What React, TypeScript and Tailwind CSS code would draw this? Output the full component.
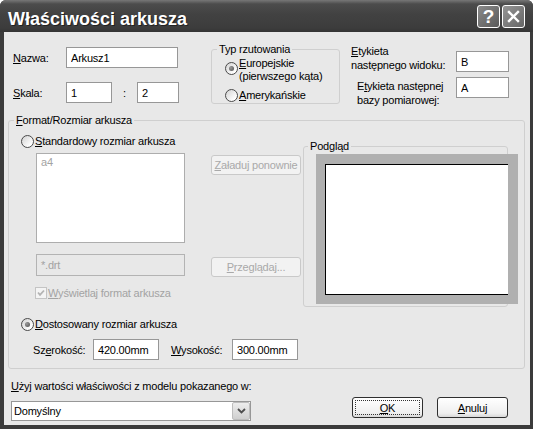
import React from "react";

function U({ children }: { children: React.ReactNode }) {
  return <span className="underline decoration-1 underline-offset-[1px]">{children}</span>;
}

function Radio({ checked }: { checked?: boolean }) {
  return (
    <span className="flex h-[13px] w-[13px] shrink-0 items-center justify-center rounded-full border border-[#4a4a4a] bg-[linear-gradient(135deg,#d2d2d2,#ffffff_80%)]">
      {checked && <span className="h-[5px] w-[5px] rounded-full bg-[radial-gradient(circle_at_35%_35%,#9a9a9a,#4e4e4e)]" />}
    </span>
  );
}

function Field({ value, className }: { value: string; className: string }) {
  return (
    <input
      readOnly
      defaultValue={value}
      className={`h-[21px] border border-[#979797] bg-white px-[4px] text-[11px] tracking-[-0.2px] text-black outline-none ${className}`}
    />
  );
}

function DisabledButton({ children, className }: { children: React.ReactNode; className: string }) {
  return (
    <div
      className={`flex h-[20px] w-[90px] items-center justify-center rounded-[3px] border border-[#c9c9c9] bg-[#f2f2f2] text-[#a9a9a9] ${className}`}
    >
      {children}
    </div>
  );
}

export default function App() {
  return (
    <div className="flex h-[429px] w-[533px] flex-col overflow-hidden rounded-t-[6px] bg-[#3b3b3b] font-['Liberation_Sans',Arial,sans-serif] text-[11px] leading-[14px] tracking-[-0.2px] text-black">
      {/* title bar */}
      <div className="flex h-[32px] shrink-0 items-start justify-between bg-[linear-gradient(to_bottom,#777777_0px,#4c4c4c_4px,#424242_14px,#3c3c3c_28px,#343434_32px)] pl-[8px] pr-[8px]">
        <span className="pt-[8px] text-[18px] font-bold leading-[22px] tracking-normal text-white [text-shadow:1px_1px_0_#222]">
          Właściwości arkusza
        </span>
        <div className="mt-[5px] flex gap-[2px]">
          <div className="flex h-[23px] w-[23px] items-center justify-center rounded-[3px] border border-white bg-[linear-gradient(135deg,#8a8a8a,#5a5a5a)]">
            <span className="text-[19px] font-bold leading-none text-white">?</span>
          </div>
          <div className="flex h-[23px] w-[23px] items-center justify-center rounded-[3px] border border-white bg-[linear-gradient(135deg,#959595,#666666)]">
            <svg width="13" height="13" viewBox="0 0 13 13">
              <path d="M2 2 L11 11 M11 2 L2 11" stroke="#fff" strokeWidth="2.4" strokeLinecap="square" />
            </svg>
          </div>
        </div>
      </div>

      {/* body */}
      <div className="mb-[4px] ml-[4px] mr-[3px] flex flex-1 flex-col bg-[#e8e8e8]">
        {/* top row */}
        <div className="flex h-[81px] shrink-0 items-start">
          <div className="ml-[9px] mt-[15px] flex flex-col gap-[14px]">
            <div className="flex items-center">
              <span className="w-[53px]">
                <U>N</U>azwa:
              </span>
              <Field value="Arkusz1" className="w-[112px]" />
            </div>
            <div className="flex items-center">
              <span className="w-[53px]">
                <U>S</U>kala:
              </span>
              <Field value="1" className="w-[46px]" />
              <span className="w-[25px] text-center">:</span>
              <Field value="2" className="w-[42px]" />
            </div>
          </div>

          <fieldset className="ml-[32px] mt-[10px] w-[129px] min-w-0 rounded-[3px] border border-[#cfcfcf] p-0">
            <legend className="ml-[5px] px-[2px]">Typ rzutowania</legend>
            <div className="pb-[1px] pl-[13px] pt-[1px]">
              <div className="flex items-start">
                <span className="mt-[5px]">
                  <Radio checked />
                </span>
                <span className="ml-[1px] leading-[13px]">
                  <U>E</U>uropejskie
                  <br />
                  (pierwszego kąta)
                </span>
              </div>
              <div className="mt-[5px] flex h-[14px] items-center">
                <Radio />
                <span className="ml-[1px]">
                  <U>A</U>merykańskie
                </span>
              </div>
            </div>
          </fieldset>

          <div className="ml-[11px] mt-[12px] flex flex-col">
            <div className="flex items-start">
              <span className="w-[105px]">
                <U>E</U>tykieta
                <br />
                następnego widoku:
              </span>
              <Field value="B" className="mt-[7px] w-[53px]" />
            </div>
            <div className="mt-[5px] flex items-start">
              <span className="ml-[6px] mt-[2px] w-[99px]">
                E<U>t</U>ykieta następnej
                <br />
                bazy pomiarowej:
              </span>
              <Field value="A" className="w-[53px]" />
            </div>
          </div>
        </div>

        {/* format group */}
        <fieldset className="ml-[4px] w-[517px] min-w-0 rounded-[3px] border border-[#cfcfcf] p-0">
          <legend className="ml-[5px] px-[2px]">
            <U>F</U>ormat/Rozmiar arkusza
          </legend>
          <div className="pb-[8px] pl-[12px]">
            <div className="flex items-start">
              <div className="flex w-[164px] flex-col">
                <div className="mt-[7px] flex h-[14px] items-center">
                  <Radio />
                  <span className="ml-[1px]">
                    <U>S</U>tandardowy rozmiar arkusza
                  </span>
                </div>
                <div className="ml-[15px] mt-[5px] h-[90px] w-[149px] border border-[#adadad] bg-white pl-[4px] pt-[1px] text-[#a3a3a3]">
                  a4
                </div>
                <div className="ml-[15px] mt-[11px] flex h-[22px] w-[149px] items-center border border-[#b3b3b3] bg-[#e8e8e8] pl-[4px] text-[#a3a3a3]">
                  *.drt
                </div>
                <div className="ml-[14px] mt-[10px] flex h-[14px] items-center text-[#a3a3a3]">
                  <span className="flex h-[12px] w-[12px] items-center justify-center border border-[#c4c4c4] bg-[#f4f4f4]">
                    <svg width="8" height="8" viewBox="0 0 8 8">
                      <path d="M1 3.5 L3 5.8 L7 1.5" fill="none" stroke="#b4b4b4" strokeWidth="1.8" />
                    </svg>
                  </span>
                  <span className="ml-[1px]">
                    <U>W</U>yświetlaj format arkusza
                  </span>
                </div>
              </div>

              <div className="ml-[26px] flex w-[90px] flex-col">
                <DisabledButton className="mt-[28px]">
                  <span>
                    <U>Z</U>aładuj ponownie
                  </span>
                </DisabledButton>
                <DisabledButton className="mt-[82px]">
                  <span>
                    <U>P</U>rzeglądaj...
                  </span>
                </DisabledButton>
              </div>

              <fieldset className="ml-[2px] mt-[12px] w-[205px] min-w-0 rounded-[3px] border border-[#cfcfcf] p-0">
                <legend className="ml-[4px] px-[2px]">Podgląd</legend>
                <div className="pb-[2px] pl-[12px] pt-[1px]">
                  <div className="flex h-[150px] w-[202px] bg-[#b0b0b0] pb-[9px] pl-[9px] pr-[10px] pt-[10px]">
                    <div className="flex-1 border-b border-l border-t border-black bg-white" />
                  </div>
                </div>
              </fieldset>
            </div>

            <div className="mt-[10px] flex h-[14px] items-center">
              <Radio checked />
              <span className="ml-[1px]">
                <U>D</U>ostosowany rozmiar arkusza
              </span>
            </div>
            <div className="ml-[12px] mt-[8px] flex items-center">
              <span className="w-[60px]">
                Sz<U>e</U>rokość:
              </span>
              <Field value="420.00mm" className="w-[66px]" />
              <span className="ml-[12px] w-[61px]">
                <U>W</U>ysokość:
              </span>
              <Field value="300.00mm" className="w-[66px]" />
            </div>
          </div>
        </fieldset>

        {/* bottom row */}
        <div className="flex items-start">
          <div className="ml-[7px] mt-[10px] flex w-[240px] flex-col">
            <span className="whitespace-nowrap">
              <U>U</U>żyj wartości właściwości z modelu pokazanego w:
            </span>
            <div className="mt-[8px] flex h-[20px] w-[240px] items-stretch border border-[#979797] bg-white">
              <span className="flex flex-1 items-center pl-[2px]">Domyślny</span>
              <span className="flex w-[18px] items-center justify-center rounded-[2px] border border-[#bdbdbd] bg-[linear-gradient(to_bottom,#ededed,#cfcfcf)]">
                <svg width="9" height="6" viewBox="0 0 9 6">
                  <path d="M1 1 L4.5 4.5 L8 1" fill="none" stroke="#4d4d4d" strokeWidth="1.8" />
                </svg>
              </span>
            </div>
          </div>
          <div className="ml-[101px] mt-[28px] flex gap-[14px]">
            <div className="h-[21px] w-[71px] rounded-[3px] border border-[#2f2f2f] bg-[linear-gradient(to_bottom,#ffffff,#efefef_80%,#d8d8d8)] p-[2px]">
              <div className="flex h-full w-full items-center justify-center border border-dotted border-[#333]">
                <span>
                  <U>O</U>K
                </span>
              </div>
            </div>
            <div className="flex h-[21px] w-[71px] items-center justify-center rounded-[3px] border border-[#2f2f2f] bg-[linear-gradient(to_bottom,#ffffff,#efefef_80%,#d8d8d8)]">
              <span>
                <U>A</U>nuluj
              </span>
            </div>
          </div>
        </div>
      </div>
    </div>
  );
}
